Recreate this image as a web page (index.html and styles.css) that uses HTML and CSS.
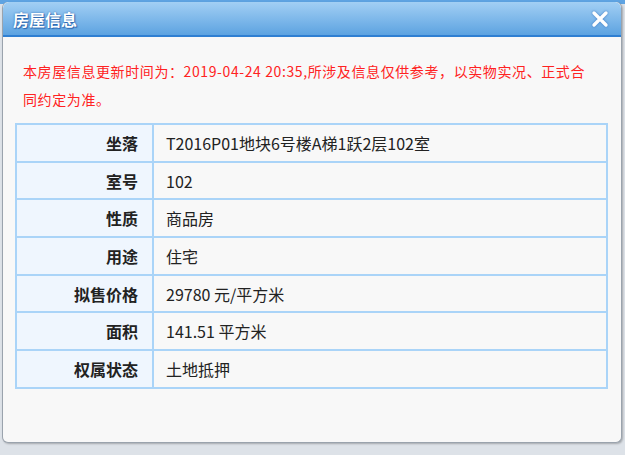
FILE: index.html
```html
<!DOCTYPE html>
<html lang="zh-CN">
<head>
  <meta charset="UTF-8">
  <title>房屋信息</title>
  <link rel="stylesheet" href="styles.css">
</head>
<body>
  <div class="dialog">
    <div class="dialog-header">
      <span class="dialog-title">房屋信息</span>
      <span class="dialog-close">
        <svg width="18" height="18" viewBox="0 0 18 18"><path d="M3 3 L15 15 M15 3 L3 15" stroke="#fff" stroke-width="3.4" stroke-linecap="round"/></svg>
      </span>
    </div>
    <div class="dialog-body">
      <p class="notice">本房屋信息更新时间为：2019-04-24 20:35,所涉及信息仅供参考，以实物实况、正式合同约定为准。</p>
      <table class="info-table">
        <tr><th>坐落</th><td>T2016P01地块6号楼A梯1跃2层102室</td></tr>
        <tr><th>室号</th><td>102</td></tr>
        <tr><th>性质</th><td>商品房</td></tr>
        <tr><th>用途</th><td>住宅</td></tr>
        <tr><th>拟售价格</th><td>29780 元/平方米</td></tr>
        <tr><th>面积</th><td>141.51 平方米</td></tr>
        <tr><th>权属状态</th><td>土地抵押</td></tr>
      </table>
    </div>
  </div>
</body>
</html>
```

FILE: styles.css
```css
body {
  margin: 0;
  padding: 2px 0 0 2px;
  background: linear-gradient(#5ea3e2 0, #5ea3e2 4px, #dde2e8 4px);
  font-family: "Noto Sans CJK SC", "Noto Sans", sans-serif;
  font-size: 14px;
  color: #222;
  height: 455px;
  box-sizing: border-box;
}
.dialog {
  width: 620px;
  height: 441px;
  box-sizing: border-box;
  border: 1px solid #9aa3ad;
  border-top: none;
  border-radius: 6px;
  background: #f8f8f8;
  box-shadow: 1px 1px 2px rgba(0,0,0,0.25);
  overflow: hidden;
  display: flex;
  flex-direction: column;
}
.dialog-header {
  height: 35px;
  box-sizing: border-box;
  background: linear-gradient(#a2cff4, #5da3e1);
  border-bottom: 2px solid #2f7fd2;
  border-radius: 6px 6px 0 0;
  display: flex;
  align-items: center;
  justify-content: space-between;
  padding: 0 12px 0 10px;
}
.dialog-title {
  color: #fff;
  font-weight: 700;
  font-size: 16px;
  text-shadow: 0 0 2px #2a66b0, 1px 1px 1px #2a66b0;
}
.dialog-close { display: flex; filter: drop-shadow(0 0 1px #3a76c0); }
.dialog-body { padding: 20px 12px 0 12px; }
.notice {
  width: 572px;
  margin: 0 0 10px 8px;
  color: #ff2222;
  line-height: 28px;
  letter-spacing: 0.6px;
}
.info-table {
  width: 593px;
  border-collapse: collapse;
  border: 2px solid #aad4f8;
  font-size: 16px;
}
.info-table th, .info-table td {
  border: 2px solid #aad4f8;
  height: 35.7px;
  padding: 0;
}
.info-table th {
  width: 121px;
  text-align: right;
  padding-right: 14px;
  background: #eff6fe;
  font-weight: 700;
}
.info-table td { padding-left: 12px; }
```
